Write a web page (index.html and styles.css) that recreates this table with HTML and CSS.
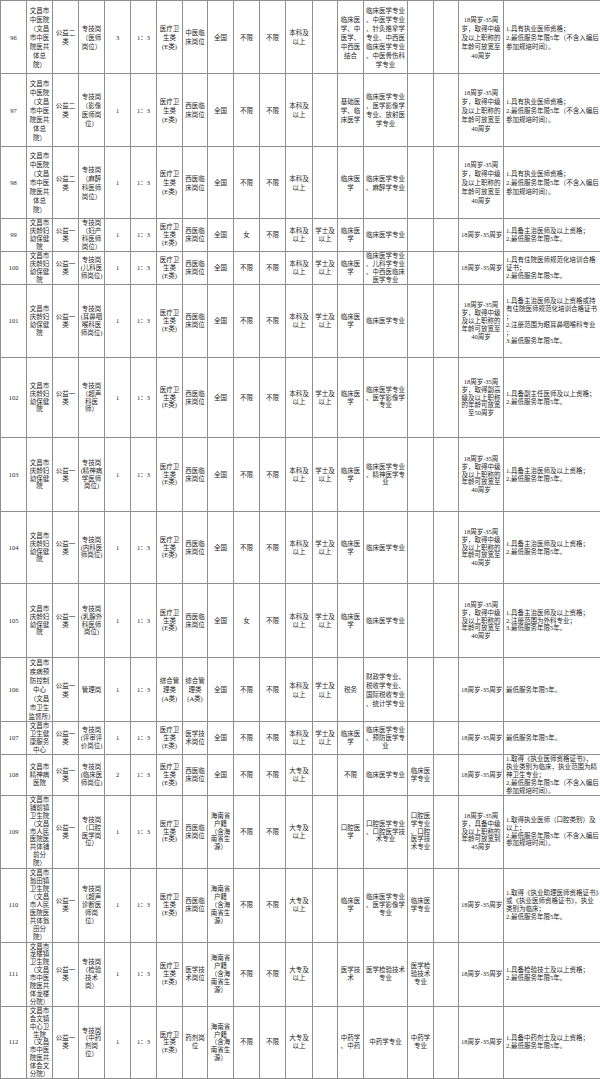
FILE: index.html
```html
<!DOCTYPE html>
<html lang="zh-CN">
<head>
<meta charset="utf-8">
<title>岗位表</title>
<link rel="stylesheet" href="styles.css">
</head>
<body>
<table class="grid">
<colgroup>
<col class="w26"><col class="w26"><col class="w26"><col class="w26"><col class="w26"><col class="w26"><col class="w26"><col class="w25"><col class="w26"><col class="w26"><col class="w26"><col class="w27"><col class="w25"><col class="w26"><col class="w44"><col class="w26"><col class="w25"><col class="w45"><col class="w97">
</colgroup>
<tbody>
<tr class="h73 lh9">
<td>96</td>
<td>文昌市中医院<br>（文昌市中医院医共体总<span class="nw">院）</span></td>
<td>公益二类</td>
<td>专技岗<br>（医师岗位）</td>
<td>3</td>
<td>1：3</td>
<td>医疗卫生类<span class="nw">(E类)</span></td>
<td>中医临床岗位</td>
<td>全国</td>
<td>不限</td>
<td>不限</td>
<td>本科及以上</td>
<td></td>
<td>临床医学、中医学、中西医结合</td>
<td>临床医学专业、中医学专业、针灸推拿学专业、中西医临床医学专业、中医骨伤科学专业</td>
<td></td>
<td></td>
<td class="age">18周岁-35周岁，取得中级及以上职称的年龄可放宽至40周岁</td>
<td class="note">1.具有执业医师资格；<br>2.最低服务年限5年（不含入编后参加规培时间）。</td>
</tr>
<tr class="h73 lh9">
<td>97</td>
<td>文昌市中医院<br>（文昌市中医院医共体总<span class="nw">院）</span></td>
<td>公益二类</td>
<td>专技岗<br>（影像医师岗位）</td>
<td>1</td>
<td>1：3</td>
<td>医疗卫生类<span class="nw">(E类)</span></td>
<td>西医临床岗位</td>
<td>全国</td>
<td>不限</td>
<td>不限</td>
<td>本科及以上</td>
<td></td>
<td>基础医学、临床医学</td>
<td>临床医学专业、医学影像学专业、放射医学专业</td>
<td></td>
<td></td>
<td class="age">18周岁-35周岁，取得中级及以上职称的年龄可放宽至40周岁</td>
<td class="note">1.具有执业医师资格；<br>2.最低服务年限5年（不含入编后参加规培时间）。</td>
</tr>
<tr class="h72 lh9">
<td>98</td>
<td>文昌市中医院<br>（文昌市中医院医共体总<span class="nw">院）</span></td>
<td>公益二类</td>
<td>专技岗<br>（麻醉科医师岗位）</td>
<td>1</td>
<td>1：3</td>
<td>医疗卫生类<span class="nw">(E类)</span></td>
<td>西医临床岗位</td>
<td>全国</td>
<td>不限</td>
<td>不限</td>
<td>本科及以上</td>
<td></td>
<td>临床医学</td>
<td>临床医学专业、麻醉学专业</td>
<td></td>
<td></td>
<td class="age">18周岁-35周岁，取得中级及以上职称的年龄可放宽至40周岁</td>
<td class="note">1.具有执业医师资格；<br>2.最低服务年限5年（不含入编后参加规培时间）。</td>
</tr>
<tr class="h33">
<td>99</td>
<td>文昌市庆龄妇幼保健院</td>
<td>公益一类</td>
<td>专技岗<br>（妇产科医师岗位）</td>
<td>1</td>
<td>1：3</td>
<td>医疗卫生类<span class="nw">(E类)</span></td>
<td>西医临床岗位</td>
<td>全国</td>
<td>女</td>
<td>不限</td>
<td>本科及以上</td>
<td>学士及以上</td>
<td>临床医学</td>
<td>临床医学专业</td>
<td></td>
<td></td>
<td class="age nw">18周岁-35周岁</td>
<td class="note">1.具备主治医师及以上资格；<br>2.最低服务年限5年。</td>
</tr>
<tr class="h33">
<td>100</td>
<td>文昌市庆龄妇幼保健院</td>
<td>公益一类</td>
<td>专技岗<br>(儿科医师岗位)</td>
<td>1</td>
<td>1：3</td>
<td>医疗卫生类<span class="nw">(E类)</span></td>
<td>西医临床岗位</td>
<td>全国</td>
<td>不限</td>
<td>不限</td>
<td>本科及以上</td>
<td>学士及以上</td>
<td>临床医学</td>
<td>临床医学专业、儿科学专业、中西医临床医学专业</td>
<td></td>
<td></td>
<td class="age nw">18周岁-35周岁</td>
<td class="note">1.具有住院医师规范化培训合格证书；<br>2.最低服务年限5年。</td>
</tr>
<tr class="h73">
<td>101</td>
<td>文昌市庆龄妇幼保健院</td>
<td>公益一类</td>
<td>专技岗<br>(耳鼻咽喉科医师岗位)</td>
<td>1</td>
<td>1：3</td>
<td>医疗卫生类<span class="nw">(E类)</span></td>
<td>西医临床岗位</td>
<td>全国</td>
<td>不限</td>
<td>不限</td>
<td>本科及以上</td>
<td>学士及以上</td>
<td>临床医学</td>
<td>临床医学专业</td>
<td></td>
<td></td>
<td class="age">18周岁-35周岁，取得中级及以上职称的年龄可放宽至40周岁</td>
<td class="note">1.具备主治医师及以上资格或持有住院医师规范化培训合格证书；<br>2.注册范围为眼耳鼻咽喉科专业；<br>3.最低服务年限5年。</td>
</tr>
<tr class="h80">
<td>102</td>
<td>文昌市庆龄妇幼保健院</td>
<td>公益一类</td>
<td>专技岗<br>（超声科医<span class="nw">师）</span></td>
<td>1</td>
<td>1：3</td>
<td>医疗卫生类<span class="nw">(E类)</span></td>
<td>西医临床岗位</td>
<td>全国</td>
<td>不限</td>
<td>不限</td>
<td>本科及以上</td>
<td>学士及以上</td>
<td>临床医学</td>
<td>临床医学专业、医学影像学专业</td>
<td></td>
<td></td>
<td class="age">18周岁-35周岁，取得副高级及以上职称的年龄可放宽至50周岁</td>
<td class="note">1.具备副主任医师及以上资格；<br>2.最低服务年限5年。</td>
</tr>
<tr class="h74">
<td>103</td>
<td>文昌市庆龄妇幼保健院</td>
<td>公益一类</td>
<td>专技岗<br>(精神病学医师岗位)</td>
<td>1</td>
<td>1：3</td>
<td>医疗卫生类<span class="nw">(E类)</span></td>
<td>西医临床岗位</td>
<td>全国</td>
<td>不限</td>
<td>不限</td>
<td>本科及以上</td>
<td>学士及以上</td>
<td>临床医学</td>
<td>临床医学专业、精神医学专业</td>
<td></td>
<td></td>
<td class="age">18周岁-35周岁，取得中级及以上职称的年龄可放宽至40周岁</td>
<td class="note">1.具备主治医师及以上资格；<br>2.最低服务年限5年。</td>
</tr>
<tr class="h72">
<td>104</td>
<td>文昌市庆龄妇幼保健院</td>
<td>公益一类</td>
<td>专技岗<br>(内科医师岗位)</td>
<td>1</td>
<td>1：3</td>
<td>医疗卫生类<span class="nw">(E类)</span></td>
<td>西医临床岗位</td>
<td>全国</td>
<td>不限</td>
<td>不限</td>
<td>本科及以上</td>
<td>学士及以上</td>
<td>临床医学</td>
<td>临床医学专业</td>
<td></td>
<td></td>
<td class="age">18周岁-35周岁，取得中级及以上职称的年龄可放宽至40周岁</td>
<td class="note">1.具备主治医师及以上资格；<br>2.最低服务年限5年。</td>
</tr>
<tr class="h74">
<td>105</td>
<td>文昌市庆龄妇幼保健院</td>
<td>公益一类</td>
<td>专技岗<br>(乳腺外科医师岗位)</td>
<td>1</td>
<td>1：3</td>
<td>医疗卫生类<span class="nw">(E类)</span></td>
<td>西医临床岗位</td>
<td>全国</td>
<td>女</td>
<td>不限</td>
<td>本科及以上</td>
<td>学士及以上</td>
<td>临床医学</td>
<td>临床医学专业</td>
<td></td>
<td></td>
<td class="age">18周岁-35周岁，取得中级及以上职称的年龄可放宽至40周岁</td>
<td class="note">1.具备主治医师及以上资格；<br>2.注册范围为外科专业；<br>3.最低服务年限5年。</td>
</tr>
<tr class="h64 lh9">
<td>106</td>
<td>文昌市疾病预防控制中心<br>（文昌市卫生<span class="nw">监督所）</span></td>
<td>公益一类</td>
<td>管理岗</td>
<td>1</td>
<td>1：3</td>
<td>综合管理类<span class="nw">(A类)</span></td>
<td>综合管理类<span class="nw">(A类)</span></td>
<td>全国</td>
<td>不限</td>
<td>不限</td>
<td>本科及以上</td>
<td>学士及以上</td>
<td>税务</td>
<td>财政学专业、税收学专业、国际税收专业、统计学专业</td>
<td></td>
<td></td>
<td class="age nw">18周岁-35周岁</td>
<td class="note">最低服务年限5年。</td>
</tr>
<tr class="h33">
<td>107</td>
<td>文昌市卫生健康服务中心</td>
<td>公益一类</td>
<td>专技岗<br>(评审评价岗位)</td>
<td>1</td>
<td>1：3</td>
<td>医疗卫生类<span class="nw">(E类)</span></td>
<td>医学技术岗位</td>
<td>全国</td>
<td>不限</td>
<td>不限</td>
<td>本科及以上</td>
<td>学士及以上</td>
<td>临床医学</td>
<td>临床医学专业、预防医学专业</td>
<td></td>
<td></td>
<td class="age nw">18周岁-35周岁</td>
<td class="note">最低服务年限5年。</td>
</tr>
<tr class="h40">
<td>108</td>
<td>文昌市精神病医院</td>
<td>公益一类</td>
<td>专技岗<br>(临床医师岗位)</td>
<td>2</td>
<td>1：3</td>
<td>医疗卫生类<span class="nw">(E类)</span></td>
<td>西医临床岗位</td>
<td>全国</td>
<td>不限</td>
<td>不限</td>
<td>大专及以上</td>
<td></td>
<td>不限</td>
<td>临床医学专业</td>
<td>临床医学专业</td>
<td></td>
<td class="age nw">18周岁-35周岁</td>
<td class="note">1.取得《执业医师资格证书》，<br>执业类别为临床，执业范围为精神卫生专业；<br>2.最低服务年限5年（不含入编后参加规培时间）。</td>
</tr>
<tr class="h73">
<td>109</td>
<td>文昌市铺前镇卫生院<br>（文昌市人民医院医共体铺前分<span class="nw">院）</span></td>
<td>公益一类</td>
<td>专技岗<br>（口腔医学岗位）</td>
<td>1</td>
<td>1：3</td>
<td>医疗卫生类<span class="nw">(E类)</span></td>
<td>西医临床岗位</td>
<td>海南省户籍<br>（含海南省生<span class="nw">源）</span></td>
<td>不限</td>
<td>不限</td>
<td>大专及以上</td>
<td></td>
<td>口腔医学</td>
<td>口腔医学专业、口腔医学技术专业</td>
<td>口腔医学专业、口腔医学技术专业</td>
<td></td>
<td class="age">18周岁-35周岁，具备中级及以上职称的年龄可放宽到45周岁</td>
<td class="note">1.取得执业医师（口腔类别）及以上；<br>2.最低服务年限5年（不含入编后参加规培时间）。</td>
</tr>
<tr class="h74">
<td>110</td>
<td>文昌市翁田镇卫生院<br>（文昌市人民医院医共体翁田分<span class="nw">院）</span></td>
<td>公益一类</td>
<td>专技岗<br>（超声诊断医师岗<span class="nw">位）</span></td>
<td>1</td>
<td>1：3</td>
<td>医疗卫生类<span class="nw">(E类)</span></td>
<td>西医临床岗位</td>
<td>海南省户籍<br>（含海南省生<span class="nw">源）</span></td>
<td>不限</td>
<td>不限</td>
<td>大专及以上</td>
<td></td>
<td>临床医学</td>
<td>临床医学专业、医学影像学专业</td>
<td>临床医学专业</td>
<td></td>
<td class="age nw">18周岁-35周岁</td>
<td class="note">1.取得《执业助理医师资格证书》或《执业医师资格证书》，执业类别为临床；<br>2.最低服务年限5年。</td>
</tr>
<tr class="h64">
<td>111</td>
<td>文昌市龙楼镇卫生院<br>（文昌市中医院医共体龙楼分院）</td>
<td>公益一类</td>
<td>专技岗<br>（检验技术<span class="nw">岗）</span></td>
<td>1</td>
<td>1：3</td>
<td>医疗卫生类<span class="nw">(E类)</span></td>
<td>医学技术岗位</td>
<td>海南省户籍<br>（含海南省生<span class="nw">源）</span></td>
<td>不限</td>
<td>不限</td>
<td>大专及以上</td>
<td></td>
<td>医学技术</td>
<td>医学检验技术专业</td>
<td>医学检验技术专业</td>
<td></td>
<td class="age nw">18周岁-35周岁</td>
<td class="note">1.具备检验技士及以上资格；<br>2.最低服务年限5年。</td>
</tr>
<tr class="h72">
<td>112</td>
<td>文昌市会文镇中心卫生院<br>（文昌市中医院医共体会文分院）</td>
<td>公益一类</td>
<td>专技岗<br>（中药剂岗<span class="nw">位）</span></td>
<td>1</td>
<td>1：3</td>
<td>医疗卫生类<span class="nw">(E类)</span></td>
<td>药剂岗位</td>
<td>海南省户籍<br>（含海南省生<span class="nw">源）</span></td>
<td>不限</td>
<td>不限</td>
<td>大专及以上</td>
<td></td>
<td>中药学、中药</td>
<td>中药学专业</td>
<td>中药学专业</td>
<td></td>
<td class="age nw">18周岁-35周岁</td>
<td class="note">1.具备中药剂士及以上资格；<br>2.最低服务年限5年。</td>
</tr>
</tbody>
</table>
</body>
</html>
```

FILE: styles.css
```css
html, body {
  margin: 0;
  padding: 0;
  background: #ffffff;
}

.grid {
  width: 600px;
  table-layout: fixed;
  border-collapse: collapse;
  font-family: "Liberation Serif", "Noto Sans CJK SC", serif;
  font-size: 6.5px;
  line-height: 7.9px;
  color: #262626;
}

.grid td {
  border: 1px solid #8e8e8e;
  padding: 0 1.5px;
  text-align: center;
  vertical-align: middle;
  line-break: anywhere;
  overflow: visible;
}

.grid td.age {
  padding: 0 2px;
}

.grid td.note {
  text-align: left;
  padding: 0 0.5px 0 2px;
}

.nw {
  white-space: nowrap;
}

.lh9 td {
  line-height: 9px;
}

.w25 { width: 25px; }
.w26 { width: 26px; }
.w27 { width: 27px; }
.w44 { width: 44px; }
.w45 { width: 45px; }
.w97 { width: 97px; }

.h33 { height: 33px; }
.h40 { height: 40px; }
.h64 { height: 64px; }
.h72 { height: 72px; }
.h73 { height: 73px; }
.h74 { height: 74px; }
.h80 { height: 80px; }
```
